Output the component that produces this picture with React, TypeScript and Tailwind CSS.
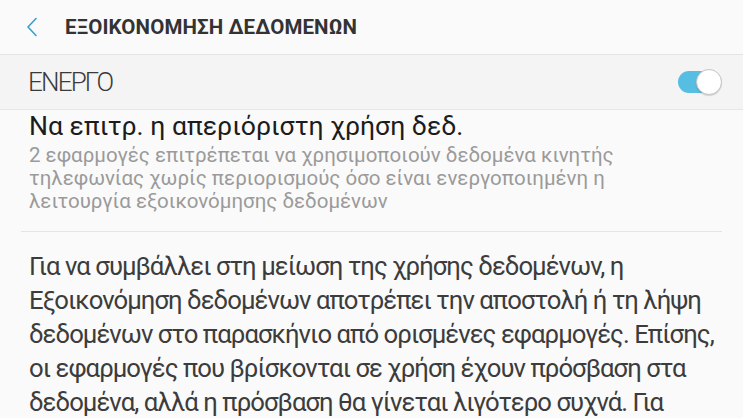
import React from 'react';

export default function App() {
  const [on, setOn] = React.useState(true);

  return (
    <div className="w-[743px] h-[418px] overflow-hidden bg-[#fafafa] font-['Roboto',sans-serif]">
      {/* Header */}
      <div className="h-[55px] flex items-center border-b border-[#e4e4e4]">
        <button className="w-[65px] h-full flex items-center pl-[26px] text-[#3a9fc9]">
          <svg width="12" height="20" viewBox="0 0 12 20" fill="none">
            <path d="M10 1.5 L2 10 L10 18.5" stroke="currentColor" strokeWidth="1.6" strokeLinecap="round" strokeLinejoin="round" />
          </svg>
        </button>
        <h1 className="text-[20.5px] font-bold tracking-[0.1px] text-[#333333] leading-none">
          ΕΞΟΙΚΟΝΟΜΗΣΗ ΔΕΔΟΜΕΝΩΝ
        </h1>
      </div>

      {/* Master switch */}
      <div className="h-[55px] flex items-center justify-between pl-[28px] pr-[21px] bg-[#f4f4f4] border-b border-[#e6e6e6]">
        <span className="text-[26px] font-light tracking-[-1.8px] text-[#3a3a3a]">ΕΝΕΡΓΟ</span>
        <button onClick={() => setOn(v => !v)} className="relative w-[45px] h-[26px]">
          <span className={`absolute left-[1px] top-[2px] w-[38px] h-[22px] rounded-full ${on ? 'bg-[#56bee3]' : 'bg-[#c9c9c9]'}`} />
          <span className={`absolute top-0 w-[26px] h-[26px] rounded-full bg-white border border-[#c4c4c4] shadow-[0_1px_1px_rgba(0,0,0,0.15)] ${on ? 'left-[19px]' : 'left-0'}`} />
        </button>
      </div>

      {/* Unrestricted data */}
      <div className="mx-[21px] pl-[8px] pt-[0px] pb-[18px] border-b border-[#e4e4e4]">
        <div className="text-[26.6px] leading-[32px] text-[#1c1c1c]">Να επιτρ. η απεριόριστη χρήση δεδ.</div>
        <div className="mt-[2px] max-w-[615px] text-[20.5px] leading-[23px] text-[#9a9a9a]">
          2 εφαρμογές επιτρέπεται να χρησιμοποιούν δεδομένα κινητής τηλεφωνίας χωρίς περιορισμούς όσο είναι ενεργοποιημένη η λειτουργία εξοικονόμησης δεδομένων
        </div>
      </div>

      {/* Description */}
      <p className="pl-[29px] pr-[6px] pt-[17px] text-[25.7px] leading-[34px] text-[#3c3c3c] tracking-[-0.95px]">
        Για να συμβάλλει στη μείωση της χρήσης δεδομένων, η Εξοικονόμηση δεδομένων αποτρέπει την αποστολή ή τη λήψη δεδομένων στο παρασκήνιο από ορισμένες εφαρμογές. Επίσης, οι εφαρμογές που βρίσκονται σε χρήση έχουν πρόσβαση στα δεδομένα, αλλά η πρόσβαση θα γίνεται λιγότερο συχνά. Για περισσότερες πληροφορίες, ανατρέξτε στη βοήθεια.
      </p>
    </div>
  );
}
